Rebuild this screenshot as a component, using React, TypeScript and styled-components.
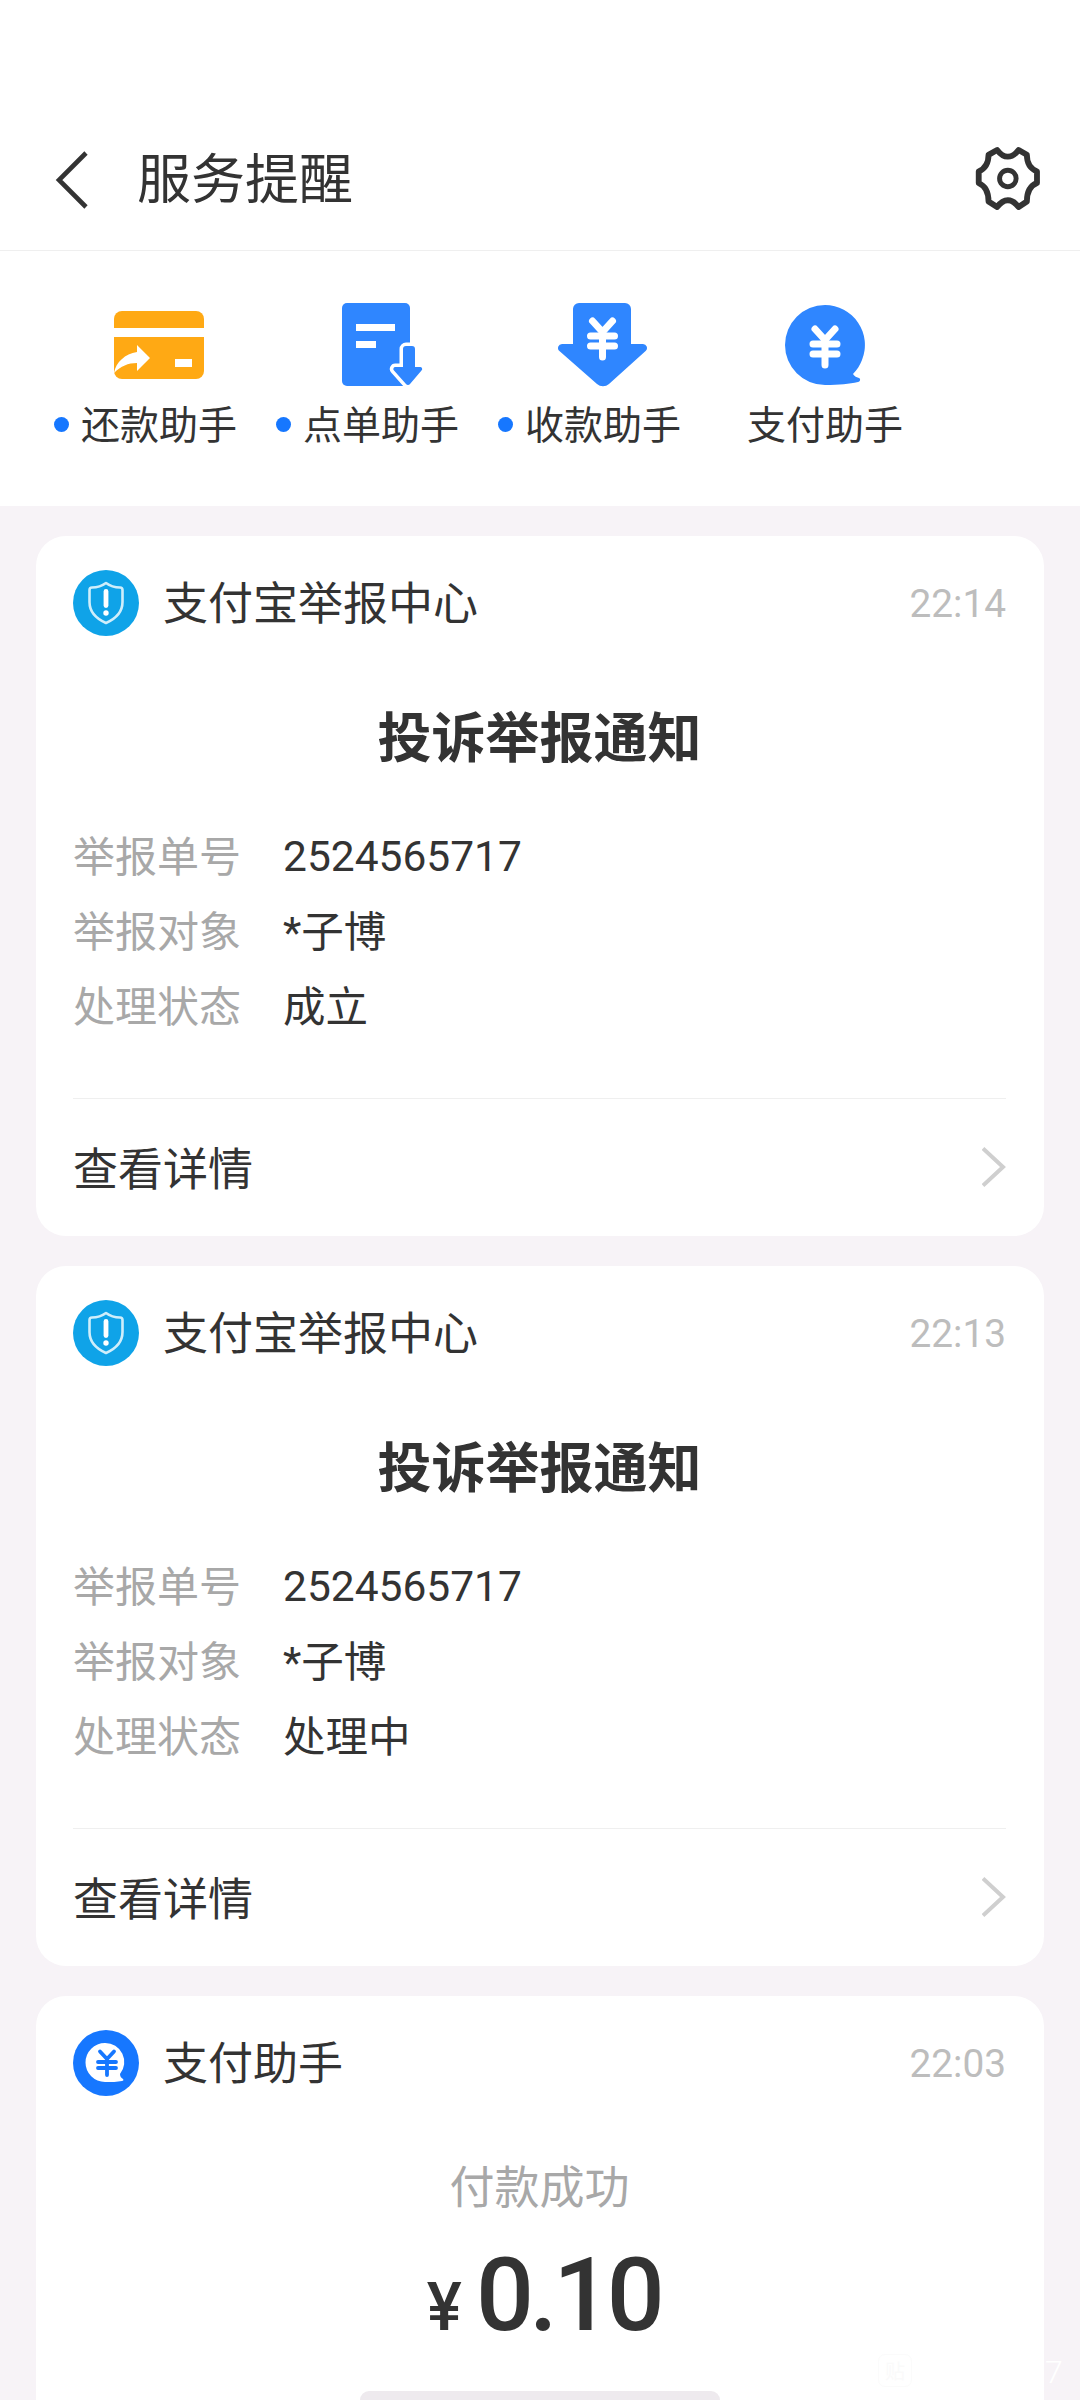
import React from 'react'
import styled, { createGlobalStyle } from 'styled-components'

const GlobalStyle = createGlobalStyle`
  html, body {
    margin: 0;
    padding: 0;
    background: #f7f3f7;
  }
  body {
    font-family: Roboto, "Noto Sans CJK SC", sans-serif;
    color: #333;
  }
`

const Page = styled.div`
  position: relative;
  width: 1080px;
  height: 2400px;
  overflow: hidden;
  background: #f7f3f7;
`

const TopBar = styled.header`
  box-sizing: border-box;
  height: 251px;
  padding: 130px 24px 21px 55px;
  display: flex;
  align-items: center;
  background: #fff;
  border-bottom: 1px solid #efefef;
`

const BackIcon = styled.svg`
  width: 34px;
  height: 58px;
`

const PageTitle = styled.h1`
  flex: 1;
  margin: 3px 0 0 48px;
  font-size: 54px;
  line-height: 68px;
  font-weight: 400;
  color: #333;
`

const SettingsIcon = styled.svg`
  width: 92px;
  height: 92px;
`

const Tabs = styled.nav`
  box-sizing: border-box;
  height: 255px;
  padding: 44px 0 0 48px;
  display: grid;
  grid-template-columns: repeat(4, 222px);
  background: #fff;
`

const Tab = styled.div`
  display: flex;
  flex-direction: column;
  align-items: center;
`

const TabIconBox = styled.div`
  height: 100px;
  display: flex;
  align-items: center;
  justify-content: center;
`

const TabLabel = styled.span<{ $dot?: boolean }>`
  position: relative;
  margin-top: 6px;
  font-size: 39px;
  line-height: 50px;
  color: #333;

  &::before {
    content: "";
    display: ${p => (p.$dot ? 'block' : 'none')};
    position: absolute;
    left: -27px;
    top: 16px;
    width: 15px;
    height: 15px;
    border-radius: 50%;
    background: #1677ff;
  }
`

const Feed = styled.main`
  padding: 30px 36px 0;
  display: flex;
  flex-direction: column;
  gap: 30px;
`

const Card = styled.section`
  box-sizing: border-box;
  min-height: 700px;
  padding: 34px 38px 0 37px;
  background: #fff;
  border-radius: 30px;
`

const CardHead = styled.div`
  display: flex;
  align-items: center;
  height: 66px;
`

const Avatar = styled.svg`
  width: 66px;
  height: 66px;
  flex: none;
`

const SourceName = styled.span`
  flex: 1;
  margin: 3px 0 0 24px;
  font-size: 45px;
  line-height: 63px;
  color: #333;
`

const Time = styled.time`
  font-size: 38.8px;
  font-weight: 400;
  color: #bdbdbd;
`

const NoticeTitle = styled.h2`
  margin: 69px 0 0;
  font-size: 54px;
  line-height: 70px;
  font-weight: 700;
  text-align: center;
  color: #333;
`

const Fields = styled.dl`
  margin: 41px 0 0;
  display: grid;
  grid-template-columns: 210px 1fr;
  grid-auto-rows: 75px;
  align-items: center;
  font-size: 42px;
`

const FieldName = styled.dt`
  color: #a8a8a8;
`

const FieldValue = styled.dd<{ $numeric?: boolean }>`
  margin: 0;
  padding-top: ${p => (p.$numeric ? '6px' : '0')};
  font-size: 42.5px;
  color: #333;
`

const CardFoot = styled.div`
  margin-top: 57px;
  height: 135px;
  display: flex;
  align-items: center;
  justify-content: space-between;
  border-top: 1px solid #efefef;
`

const FootLabel = styled.span`
  font-size: 45px;
  color: #333;
`

const Chevron = styled.svg`
  width: 24px;
  height: 40px;
`

const PayStatus = styled.div`
  margin-top: 63px;
  font-size: 45px;
  line-height: 60px;
  text-align: center;
  color: #a8a8a8;
`

const Amount = styled.div`
  margin-top: 21px;
  padding-left: 8px;
  display: flex;
  justify-content: center;
  align-items: baseline;
  line-height: 110px;
  font-weight: 500;
  color: #333;
`

const Currency = styled.span`
  font-size: 66px;
  margin-right: 14px;
`

const AmountValue = styled.span`
  font-size: 102px;
  letter-spacing: -4.5px;
`

const HomeIndicator = styled.div`
  position: absolute;
  left: 360px;
  bottom: -9px;
  width: 360px;
  height: 18px;
  border-radius: 9px;
  background: #eeeaee;
`

const WatermarkBadge = styled.div`
  position: absolute;
  left: 878px;
  top: 2354px;
  width: 34px;
  height: 33px;
  box-sizing: border-box;
  display: flex;
  align-items: center;
  justify-content: center;
  border: 1px solid #fbfbfb;
  border-radius: 7px;
  font-size: 20px;
  color: #fafafa;
`

const WatermarkCount = styled.span`
  position: absolute;
  left: 1045px;
  top: 2352px;
  font-size: 32px;
  line-height: 40px;
  font-weight: 300;
  color: #fff;
`

const Yen = ({ x, y }: { x: number; y: number }) => (
  <g transform={`translate(${x} ${y})`} fill="none" stroke="#fff" strokeWidth={7} strokeLinecap="round" strokeLinejoin="round">
    <path d="M-10 -18L0 -7L10 -18" />
    <path d="M-12 -3H12M-12 7H12M0 -7V18" />
  </g>
)

const CardIcon = () => (
  <svg width="90" height="68" viewBox="0 0 90 68">
    <path d="M0 17V8a8 8 0 0 1 8-8h74a8 8 0 0 1 8 8v9Z" fill="#ffa914" />
    <path d="M0 26h90v34a8 8 0 0 1-8 8H8a8 8 0 0 1-8-8Z" fill="#ffa914" />
    <path d="M36 47L23 34v7C11 43 2 51 0 62c7-7 14-10 23-10v8Z" fill="#fff" />
    <rect x="61" y="48" width="17" height="8" fill="#fff" />
  </svg>
)

const ArrowShape = 'M61 46a3 3 0 0 1 3-3h6a3 3 0 0 1 3 3v18h5a2 2 0 0 1 1.5 3.5L68 81a2.5 2.5 0 0 1-4 0L52 67.5a2 2 0 0 1 1.5-3.5H61Z'

const OrderIcon = () => (
  <svg width="81" height="84" viewBox="0 0 81 84" style={{ marginLeft: 3 }}>
    <rect width="68" height="83" rx="5" fill="#2f86ff" />
    <rect x="14" y="21" width="39" height="7" fill="#fff" />
    <rect x="14" y="38" width="20" height="7" fill="#fff" />
    <path d={ArrowShape} fill="#fff" stroke="#fff" strokeWidth="7" strokeLinejoin="round" />
    <path d={ArrowShape} fill="#2f86ff" />
  </svg>
)

const ReceiveIcon = () => (
  <svg width="90" height="84" viewBox="0 0 90 84">
    <path
      d="M15 6a6 6 0 0 1 6-6h46a6 6 0 0 1 6 6v35h12a4 4 0 0 1 2.6 7L51 81a9 9 0 0 1-12 0L1.4 48A4 4 0 0 1 4 41h11Z"
      fill="#2f86ff"
    />
    <Yen x={44.5} y={36} />
  </svg>
)

const PayIcon = () => (
  <svg width="80" height="80" viewBox="0 0 80 80">
    <path
      d="M40 0a40 40 0 0 1 37 55c-2 5-5 10-9 14 1 2 3 3 6 4 2 1 1 4-1 4-9 2-18 3-33 3A40 40 0 0 1 40 0Z"
      fill="#2f86ff"
    />
    <Yen x={40} y={42} />
  </svg>
)

const ShieldAvatar = () => (
  <Avatar viewBox="0 0 66 66">
    <circle cx="33" cy="33" r="33" fill="#0fa3e8" />
    <path
      d="M33 13C37 16 42 17.5 47 17.5Q49.5 17.5 49.5 20V32C49.5 43 42 49 33 53C24 49 16.5 43 16.5 32V20Q16.5 17.5 19 17.5C24 17.5 29 16 33 13Z"
      fill="none"
      stroke="#cfeefb"
      strokeWidth="2.6"
      strokeLinejoin="round"
    />
    <rect x="30.6" y="19" width="4.8" height="19" rx="2.4" fill="#fff" />
    <circle cx="33" cy="43" r="2.7" fill="#fff" />
  </Avatar>
)

const PayAvatar = () => (
  <Avatar viewBox="0 0 66 66">
    <circle cx="33" cy="33" r="33" fill="#1677ff" />
    <path
      d="M32 13a19 19 0 0 1 15 31c0 2 1 4 3 5 1 1 0 2-1 2-5 1-10 1-17 1a19.500 19.500 0 0 1 0-39Z"
      fill="#fff"
    />
    <path
      d="M27 21.500L34 29L41 21.500M25 32H43M25 38H43M34 29V45"
      fill="none"
      stroke="#1677ff"
      strokeWidth="3.8"
      strokeLinecap="round"
      strokeLinejoin="round"
    />
  </Avatar>
)

const fields = ['举报单号', '举报对象', '处理状态']

const notices = [
  { time: '22:14', values: ['2524565717', '*子博', '成立'] },
  { time: '22:13', values: ['2524565717', '*子博', '处理中'] },
]

const tabs = [
  { label: '还款助手', dot: true, icon: <CardIcon /> },
  { label: '点单助手', dot: true, icon: <OrderIcon /> },
  { label: '收款助手', dot: true, icon: <ReceiveIcon /> },
  { label: '支付助手', dot: false, icon: <PayIcon /> },
]

export default function App() {
  return (
    <Page>
      <GlobalStyle />
      <TopBar>
        <BackIcon viewBox="0 0 34 58">
          <path d="M31 2L4 29L31 56" fill="none" stroke="#333" strokeWidth="4.6" strokeLinejoin="miter" />
        </BackIcon>
        <PageTitle>服务提醒</PageTitle>
        <SettingsIcon viewBox="0 0 300 300">
          <path
            d="M108 52C120 68 130 74 143 74C156 74 166 68 178 52L205 68C205 90 212 112 238 122L238 160C212 170 205 195 205 220L178 238C166 222 156 216 143 216C130 216 120 222 108 238L80 220C80 195 72 170 48 160L48 122C72 112 80 90 80 68Z"
            fill="none"
            stroke="#333"
            strokeWidth="19"
            strokeLinejoin="round"
          />
          <circle cx="143" cy="145" r="27" fill="none" stroke="#333" strokeWidth="16" />
        </SettingsIcon>
      </TopBar>

      <Tabs>
        {tabs.map(tab => (
          <Tab key={tab.label}>
            <TabIconBox>{tab.icon}</TabIconBox>
            <TabLabel $dot={tab.dot}>{tab.label}</TabLabel>
          </Tab>
        ))}
      </Tabs>

      <Feed>
        {notices.map(notice => (
          <Card key={notice.time}>
            <CardHead>
              <ShieldAvatar />
              <SourceName>支付宝举报中心</SourceName>
              <Time>{notice.time}</Time>
            </CardHead>
            <NoticeTitle>投诉举报通知</NoticeTitle>
            <Fields>
              {fields.map((name, i) => (
                <React.Fragment key={name}>
                  <FieldName>{name}</FieldName>
                  <FieldValue $numeric={/^\d+$/.test(notice.values[i])}>{notice.values[i]}</FieldValue>
                </React.Fragment>
              ))}
            </Fields>
            <CardFoot>
              <FootLabel>查看详情</FootLabel>
              <Chevron viewBox="0 0 24 40">
                <path d="M1 1.500L21 20L1 38.500" fill="none" stroke="#cfcfcf" strokeWidth="4" />
              </Chevron>
            </CardFoot>
          </Card>
        ))}

        <Card>
          <CardHead>
            <PayAvatar />
            <SourceName>支付助手</SourceName>
            <Time>22:03</Time>
          </CardHead>
          <PayStatus>付款成功</PayStatus>
          <Amount>
            <Currency>¥</Currency>
            <AmountValue>0.10</AmountValue>
          </Amount>
        </Card>
      </Feed>

      <WatermarkBadge>贴</WatermarkBadge>
      <WatermarkCount>7</WatermarkCount>
      <HomeIndicator />
    </Page>
  )
}
